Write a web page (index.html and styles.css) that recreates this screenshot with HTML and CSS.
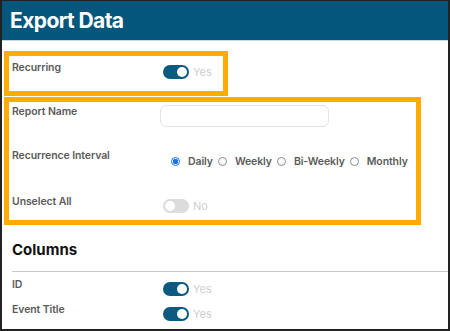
FILE: index.html
```html
<!DOCTYPE html>
<html lang="en">
  <head>
    <meta charset="UTF-8" />
    <title>Export Data</title>
    <link rel="stylesheet" href="styles.css">
  </head>
  <body>
    <div class="export-frame">
      <div class="export-header">
        <h1 class="export-title">Export Data</h1>
      </div>

      <div class="export-body">
        <!-- Recurring switch -->
        <div class="highlight highlight-small">
          <div class="form-row row-recurring">
            <span class="form-label">Recurring</span>
            <div class="form-control">
              <span class="switch is-on"></span>
              <span class="switch-text">Yes</span>
            </div>
          </div>
        </div>

        <!-- Recurrence settings -->
        <div class="highlight highlight-wide">
          <div class="form-row row-tall">
            <span class="form-label">Report Name</span>
            <div class="form-control">
              <input type="text" class="form-input" />
            </div>
          </div>

          <div class="form-row row-tall">
            <span class="form-label">Recurrence Interval</span>
            <div class="form-control radio-group">
              <label class="radio-item"><span class="radio is-checked"></span>Daily</label>
              <label class="radio-item"><span class="radio"></span>Weekly</label>
              <label class="radio-item"><span class="radio"></span>Bi-Weekly</label>
              <label class="radio-item"><span class="radio"></span>Monthly</label>
            </div>
          </div>

          <div class="form-row row-last">
            <span class="form-label">Unselect All</span>
            <div class="form-control">
              <span class="switch"></span>
              <span class="switch-text">No</span>
            </div>
          </div>
        </div>

        <h2 class="section-title">Columns</h2>
        <hr class="section-rule" />

        <div class="form-row row-column">
          <span class="form-label">ID</span>
          <div class="form-control">
            <span class="switch is-on"></span>
            <span class="switch-text">Yes</span>
          </div>
        </div>
        <div class="form-row row-column">
          <span class="form-label">Event Title</span>
          <div class="form-control">
            <span class="switch is-on"></span>
            <span class="switch-text">Yes</span>
          </div>
        </div>
      </div>
    </div>
  </body>
</html>
```

FILE: styles.css
```css
/* Page */
body {
  margin: 0;
  font-family: Inter, "Noto Sans", Arial, sans-serif;
  background: #fff;
}

/* Window frame */
.export-frame {
  width: 450px;
  height: 331px;
  box-sizing: border-box;
  border: 2px solid #222;
  border-top-width: 1px;
  overflow: hidden;
  background: #fff;
}

/* Title bar */
.export-header {
  height: 39px;
  background-color: #04567a;
  border-bottom: 1px solid #c9d6dd;
  padding-left: 8px;
  display: flex;
  align-items: center;
}

.export-title {
  margin: 0;
  font-size: 21px;
  font-weight: 700;
  color: #fff;
  letter-spacing: -0.6px;
}

.export-body {
  padding-top: 10px;
}

/* Orange annotation boxes */
.highlight {
  border: 5px solid #ffab00;
  margin-left: 2px;
  box-sizing: border-box;
}

.highlight-small {
  width: 224px;
  height: 45px;
}

.highlight-wide {
  width: 417px;
  height: 128px;
  margin-top: 1px;
  padding-top: 3px;
}

/* Form rows */
.form-row {
  display: flex;
  align-items: flex-start;
  padding-left: 3px;
}

.row-recurring {
  padding-top: 5px;
}

.row-tall {
  height: 44px;
}

.row-tall + .row-tall {
  height: 46px;
}

.row-column {
  height: 25px;
  padding-left: 10px;
}

.form-label {
  width: 148px;
  flex-shrink: 0;
  font-size: 10.5px;
  line-height: 14px;
  font-weight: 600;
  color: #5b5b5b;
  letter-spacing: -0.1px;
}

.form-control {
  display: flex;
  align-items: center;
}

/* Text input */
.form-input {
  width: 169px;
  height: 22px;
  box-sizing: border-box;
  border: 1px solid #e3e3e3;
  border-radius: 6px;
  background: #fff;
  outline: none;
}

/* Toggle switches */
.switch {
  position: relative;
  display: inline-block;
  width: 26px;
  height: 14px;
  margin: 4px 0 0 3px;
  border-radius: 7px;
  background-color: #dcdcdc;
}

.switch::after {
  content: "";
  position: absolute;
  top: 2px;
  left: 2px;
  width: 10px;
  height: 10px;
  border-radius: 50%;
  background: #fff;
}

.switch.is-on {
  background-color: #0b5a80;
}

.switch.is-on::after {
  left: 14px;
}

.switch-text {
  margin: 4px 0 0 4px;
  font-size: 11px;
  color: #cfcfcf;
}

/* Radio buttons */
.radio-group {
  padding: 6px 0 0 11px;
  gap: 5px;
  white-space: nowrap;
}

.radio-item {
  display: flex;
  align-items: center;
  font-size: 10.5px;
  font-weight: 600;
  color: #5b5b5b;
  letter-spacing: -0.1px;
}

.radio {
  width: 7px;
  height: 7px;
  border: 1px solid #8a8a8a;
  border-radius: 50%;
  margin-right: 8px;
  box-sizing: content-box;
}

.radio.is-checked {
  border-color: #1a73e8;
  background: radial-gradient(circle, #1a73e8 0 2.5px, #fff 3px);
}

/* Columns section */
.section-title {
  margin: 15px 0 0 10px;
  font-size: 15px;
  line-height: 20px;
  font-weight: 700;
  color: #111;
}

.section-rule {
  margin: 11px 0 6px 10px;
  border: none;
  border-top: 1px solid #c8c8c8;
}
```
